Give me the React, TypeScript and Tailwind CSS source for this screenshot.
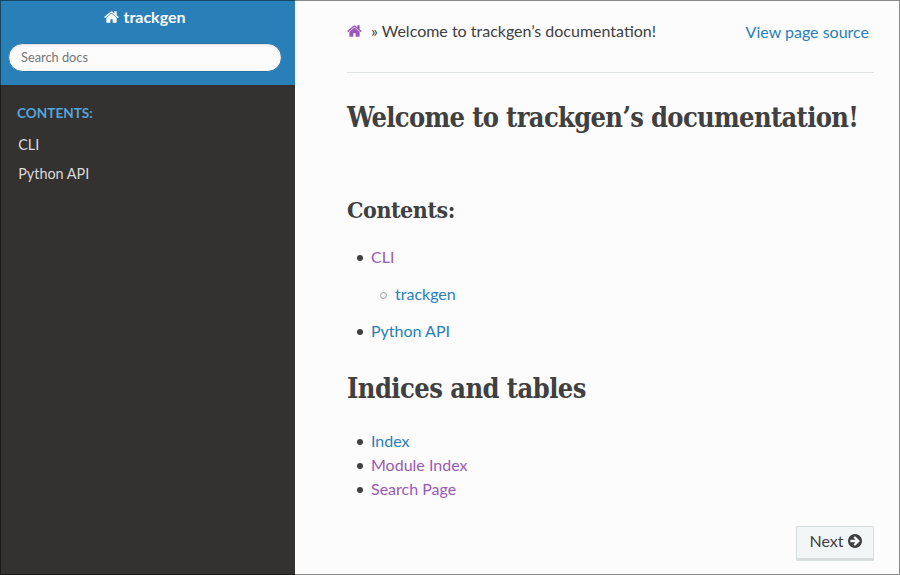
import React from "react";

const slab = "font-['Roboto_Slab','DejaVu_Serif_Condensed','DejaVu_Serif',serif] font-bold whitespace-nowrap";

function HomeIcon({ className }: { className: string }) {
  return (
    <svg viewBox="0 0 1664 1792" fill="currentColor" className={className} aria-hidden="true">
      <path d="M1408 992v480q0 26-19 45t-45 19h-384v-384h-256v384h-384q-26 0-45-19t-19-45v-480q0-1 .5-3t.5-3l575-474 575 474q1 2 1 6zm223-69l-62 74q-8 9-21 11h-3q-13 0-21-7l-692-577-692 577q-12 8-24 7-13-2-21-11l-62-74q-8-10-7-23.5t11-21.5l719-599q32-26 76-26t76 26l244 204v-195q0-14 9-23t23-9h192q14 0 23 9t9 23v408l219 182q10 8 11 21.5t-7 23.5z" />
    </svg>
  );
}

function ArrowIcon() {
  return (
    <svg viewBox="128 128 1536 1536" fill="currentColor" className="size-[14px]" aria-hidden="true">
      <path d="M1413 896q0-27-18-45l-91-91-362-362q-18-18-45-18t-45 18l-91 91q-18 18-18 45t18 45l189 189h-502q-26 0-45 19t-19 45v128q0 26 19 45t45 19h502l-189 189q-19 19-19 45t19 45l91 91q18 18 45 18t45-18l362-362 91-91q18-18 18-45zm251 0q0 209-103 385.5t-279.5 279.5-385.5 103-385.5-103-279.5-279.5-103-385.5 103-385.5 279.5-279.5 385.5-103 385.5 103 279.5 279.5 103 385.5z" />
    </svg>
  );
}

function Item({ label, visited, nested }: { label: string; visited?: boolean; nested?: boolean }) {
  return (
    <div className="flex items-center gap-2">
      <span className={nested ? "mt-[2px] -ml-px size-[7px] rounded-full border border-[#a0a5a5]" : "mt-[2px] size-[6px] rounded-full bg-[#404040]"} />
      <a className={visited ? "text-[#9b59b6]" : "text-[#2980b9]"}>{label}</a>
    </div>
  );
}

function Sidebar() {
  return (
    <aside className="w-[295px] shrink-0 bg-[#343131]">
      <div className="h-[85px] bg-[#2980b9] pt-[5px]">
        <a className="flex h-6 items-center justify-center gap-1 pr-[5px] text-base font-bold text-[#fcfcfc]">
          <HomeIcon className="h-4 w-[15px]" />
          <span>trackgen</span>
        </a>
        <input
          placeholder="Search docs"
          className="mt-[14px] ml-2 block h-[29px] w-[274px] rounded-full border border-[#2472a4] bg-[#fcfcfc] px-3 pb-[2px] text-[12.8px] shadow-[inset_0_1px_3px_#ddd] outline-none placeholder:text-[#757575]"
        />
      </div>
      <p className="mt-3 pl-[17px] text-[13.6px] leading-8 font-bold text-[#55a5d9]">CONTENTS:</p>
      <ul className="mt-px pl-[18.2px] text-[14.4px] leading-[29px] text-[#d9d9d9]">
        <li>CLI</li>
        <li>Python API</li>
      </ul>
    </aside>
  );
}

export default function App() {
  return (
    <div className="relative flex h-[575px] w-[900px] overflow-hidden bg-[#fcfcfc] font-[Lato,sans-serif] text-base leading-6 text-[#404040]">
      <Sidebar />
      <main className="min-w-0 flex-1 pr-[26px] pl-[52px]">
        <nav className="flex h-[73px] justify-between border-b border-[#e1e4e5] pt-[19px]">
          <div className="flex h-6 items-center whitespace-pre">
            <HomeIcon className="mr-[9px] h-4 w-[15px] text-[#9b59b6]" />
            <span>» Welcome to trackgen’s documentation!</span>
          </div>
          <a className="mt-px mr-[5px] text-[#2980b9]">View page source</a>
        </nav>
        <h1 className={`${slab} mt-[27px] h-9 text-[27px] leading-9 tracking-[-0.65px]`}>Welcome to trackgen’s documentation!</h1>
        <h2 className={`${slab} mt-[58px] h-8 text-[23px] leading-8 tracking-[-0.45px]`}>Contents:</h2>
        <ul className="mt-[19px] pl-[10px]">
          <li>
            <Item label="CLI" visited />
            <ul className="my-[13px] pl-6">
              <li><Item label="trackgen" nested /></li>
            </ul>
          </li>
          <li><Item label="Python API" /></li>
        </ul>
        <h1 className={`${slab} mt-7 h-9 text-[27px] leading-9 tracking-[-0.55px]`}>Indices and tables</h1>
        <ul className="mt-[22px] pl-[10px]">
          <li><Item label="Index" /></li>
          <li><Item label="Module Index" visited /></li>
          <li><Item label="Search Page" visited /></li>
        </ul>
        <div className="mt-[25px] flex justify-end">
          <a className="flex h-[35px] w-[78px] items-center justify-center gap-1 rounded-[1px] border border-[#d8dddd] bg-[#f3f6f6] pb-[5px] pl-px shadow-[inset_0_-2px_0_#d8dddd]">
            Next <ArrowIcon />
          </a>
        </div>
      </main>
      <div className="pointer-events-none absolute inset-0 border border-black/45" />
    </div>
  );
}
